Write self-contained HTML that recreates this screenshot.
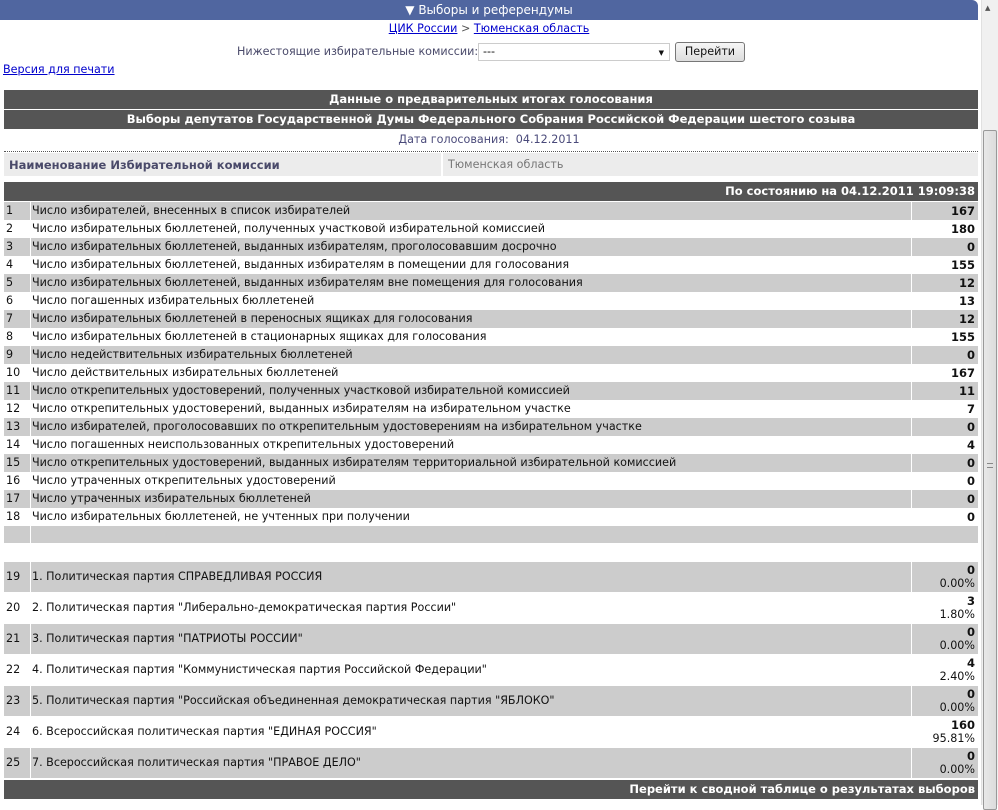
<!DOCTYPE html>
<html><head><meta charset="utf-8"><style>
*{margin:0;padding:0;box-sizing:border-box}
body{width:998px;height:805px;overflow:hidden;background:#fff;font-family:"DejaVu Sans","Liberation Sans",sans-serif;font-size:11.15px;color:#111;position:relative}
.a{position:absolute;white-space:nowrap}
.dk{background:#555;color:#fff;font-weight:bold;text-align:center;line-height:19px;font-size:11.5px}
.r{position:absolute;left:4px;width:974px;height:18px;line-height:18px}
.r.g{background:#ccc}
.r .n{position:absolute;left:2px}
.r .t{position:absolute;left:28px}
.r .v{position:absolute;right:3px;font-weight:bold;font-size:11.5px}
.r.g .s1{position:absolute;left:26px;top:0;width:1px;height:100%;background:#fff}
.r.g .s2{position:absolute;left:907px;top:0;width:1px;height:100%;background:#fff}
.p{position:absolute;left:4px;width:974px;height:30px}
.p.g{background:#ccc}
.p .n{position:absolute;left:2px;top:8px}
.p .t{position:absolute;left:28px;top:8px}
.p .v{position:absolute;right:3px;top:1px;font-weight:bold;font-size:11.5px}
.p .pc{position:absolute;right:3px;top:15px}
.p.g .s1{position:absolute;left:26px;top:0;width:1px;height:100%;background:#fff}
.p.g .s2{position:absolute;left:907px;top:0;width:1px;height:100%;background:#fff}
a{color:#00c}
</style></head><body>
<div class="a" style="left:0;top:0;width:978px;height:20px;background:#5066a0;color:#fff;font-size:12px;line-height:20px;text-align:center;border-top-right-radius:6px">▼ Выборы и референдумы</div>
<div class="a" style="left:0;top:21px;width:978px;text-align:center;line-height:16px;color:#555"><a href="#">ЦИК России</a> &gt; <a href="#">Тюменская область</a></div>
<div class="a" style="left:237px;top:45px;color:#4a4a6a;line-height:14px">Нижестоящие избирательные комиссии:</div>
<div class="a" style="left:478px;top:43px;width:192px;height:18px;border:1px solid #ccc;background:#fff;line-height:16px;padding-left:4px">---<span style="position:absolute;right:5px;top:1px;font-size:7px">▼</span></div>
<div class="a" style="left:675px;top:42px;width:70px;height:20px;border:1px solid #777;border-radius:3px;background:linear-gradient(#f6f6f6,#ddd);text-align:center;line-height:18px">Перейти</div>
<div class="a" style="left:3px;top:63px;line-height:14px"><a href="#">Версия для печати</a></div>
<div class="a dk" style="left:4px;top:90px;width:974px;height:19px">Данные о предварительных итогах голосования</div>
<div class="a dk" style="left:4px;top:110px;width:974px;height:19px">Выборы депутатов Государственной Думы Федерального Собрания Российской Федерации шестого созыва</div>
<div class="a" style="left:0;top:133px;width:978px;text-align:center;color:#4a4a7a;line-height:14px">Дата голосования:&nbsp; 04.12.2011</div>
<div class="a" style="left:4px;top:151px;width:974px;border-top:1px dotted #555"></div>
<div class="a" style="left:4px;top:153px;width:974px;height:23px;background:#ececec"></div>
<div class="a" style="left:441px;top:153px;width:2px;height:23px;background:#fff"></div>
<div class="a" style="left:9px;top:158px;font-weight:bold;color:#4a4a6a;font-size:11.5px">Наименование Избирательной комиссии</div>
<div class="a" style="left:448px;top:158px;color:#777">Тюменская область</div>
<div class="a dk" style="left:4px;top:182px;width:974px;height:19px;text-align:right;padding-right:3px">По состоянию на 04.12.2011 19:09:38</div>

<div class="r g" style="top:202px"><i class="s1"></i><i class="s2"></i><span class="n">1</span><span class="t">Число избирателей, внесенных в список избирателей</span><span class="v">167</span></div>
<div class="r" style="top:220px"><span class="n">2</span><span class="t">Число избирательных бюллетеней, полученных участковой избирательной комиссией</span><span class="v">180</span></div>
<div class="r g" style="top:238px"><i class="s1"></i><i class="s2"></i><span class="n">3</span><span class="t">Число избирательных бюллетеней, выданных избирателям, проголосовавшим досрочно</span><span class="v">0</span></div>
<div class="r" style="top:256px"><span class="n">4</span><span class="t">Число избирательных бюллетеней, выданных избирателям в помещении для голосования</span><span class="v">155</span></div>
<div class="r g" style="top:274px"><i class="s1"></i><i class="s2"></i><span class="n">5</span><span class="t">Число избирательных бюллетеней, выданных избирателям вне помещения для голосования</span><span class="v">12</span></div>
<div class="r" style="top:292px"><span class="n">6</span><span class="t">Число погашенных избирательных бюллетеней</span><span class="v">13</span></div>
<div class="r g" style="top:310px"><i class="s1"></i><i class="s2"></i><span class="n">7</span><span class="t">Число избирательных бюллетеней в переносных ящиках для голосования</span><span class="v">12</span></div>
<div class="r" style="top:328px"><span class="n">8</span><span class="t">Число избирательных бюллетеней в стационарных ящиках для голосования</span><span class="v">155</span></div>
<div class="r g" style="top:346px"><i class="s1"></i><i class="s2"></i><span class="n">9</span><span class="t">Число недействительных избирательных бюллетеней</span><span class="v">0</span></div>
<div class="r" style="top:364px"><span class="n">10</span><span class="t">Число действительных избирательных бюллетеней</span><span class="v">167</span></div>
<div class="r g" style="top:382px"><i class="s1"></i><i class="s2"></i><span class="n">11</span><span class="t">Число открепительных удостоверений, полученных участковой избирательной комиссией</span><span class="v">11</span></div>
<div class="r" style="top:400px"><span class="n">12</span><span class="t">Число открепительных удостоверений, выданных избирателям на избирательном участке</span><span class="v">7</span></div>
<div class="r g" style="top:418px"><i class="s1"></i><i class="s2"></i><span class="n">13</span><span class="t">Число избирателей, проголосовавших по открепительным удостоверениям на избирательном участке</span><span class="v">0</span></div>
<div class="r" style="top:436px"><span class="n">14</span><span class="t">Число погашенных неиспользованных открепительных удостоверений</span><span class="v">4</span></div>
<div class="r g" style="top:454px"><i class="s1"></i><i class="s2"></i><span class="n">15</span><span class="t">Число открепительных удостоверений, выданных избирателям территориальной избирательной комиссией</span><span class="v">0</span></div>
<div class="r" style="top:472px"><span class="n">16</span><span class="t">Число утраченных открепительных удостоверений</span><span class="v">0</span></div>
<div class="r g" style="top:490px"><i class="s1"></i><i class="s2"></i><span class="n">17</span><span class="t">Число утраченных избирательных бюллетеней</span><span class="v">0</span></div>
<div class="r" style="top:508px"><span class="n">18</span><span class="t">Число избирательных бюллетеней, не учтенных при получении</span><span class="v">0</span></div>
<div class="r g" style="top:526px;height:17px"><i class="s1"></i></div>

<div class="p g" style="top:562px"><i class="s1"></i><i class="s2"></i><span class="n">19</span><span class="t">1. Политическая партия СПРАВЕДЛИВАЯ РОССИЯ</span><span class="v">0</span><span class="pc">0.00%</span></div>
<div class="p" style="top:593px"><span class="n">20</span><span class="t">2. Политическая партия "Либерально-демократическая партия России"</span><span class="v">3</span><span class="pc">1.80%</span></div>
<div class="p g" style="top:624px"><i class="s1"></i><i class="s2"></i><span class="n">21</span><span class="t">3. Политическая партия "ПАТРИОТЫ РОССИИ"</span><span class="v">0</span><span class="pc">0.00%</span></div>
<div class="p" style="top:655px"><span class="n">22</span><span class="t">4. Политическая партия "Коммунистическая партия Российской Федерации"</span><span class="v">4</span><span class="pc">2.40%</span></div>
<div class="p g" style="top:686px"><i class="s1"></i><i class="s2"></i><span class="n">23</span><span class="t">5. Политическая партия "Российская объединенная демократическая партия "ЯБЛОКО"</span><span class="v">0</span><span class="pc">0.00%</span></div>
<div class="p" style="top:717px"><span class="n">24</span><span class="t">6. Всероссийская политическая партия "ЕДИНАЯ РОССИЯ"</span><span class="v">160</span><span class="pc">95.81%</span></div>
<div class="p g" style="top:748px"><i class="s1"></i><i class="s2"></i><span class="n">25</span><span class="t">7. Всероссийская политическая партия "ПРАВОЕ ДЕЛО"</span><span class="v">0</span><span class="pc">0.00%</span></div>
<div class="a dk" style="left:4px;top:780px;width:974px;height:19px;text-align:right;padding-right:3px">Перейти к сводной таблице о результатах выборов</div>

<div class="a" style="left:981px;top:0;width:17px;height:805px;background:#f0f0f0;border-left:1px solid #e0e0e0"></div>
<div class="a" style="left:985px;top:4px;font-size:7px;color:#555">▲</div>
<div class="a" style="left:983px;top:130px;width:14px;height:680px;background:linear-gradient(90deg,#e8e8e8,#dcdcdc);border:1px solid #999;border-radius:2px"></div>
<div class="a" style="left:987px;top:463px;width:6px;height:5px;border-top:1px solid #888;border-bottom:1px solid #888"></div>
</body></html>
